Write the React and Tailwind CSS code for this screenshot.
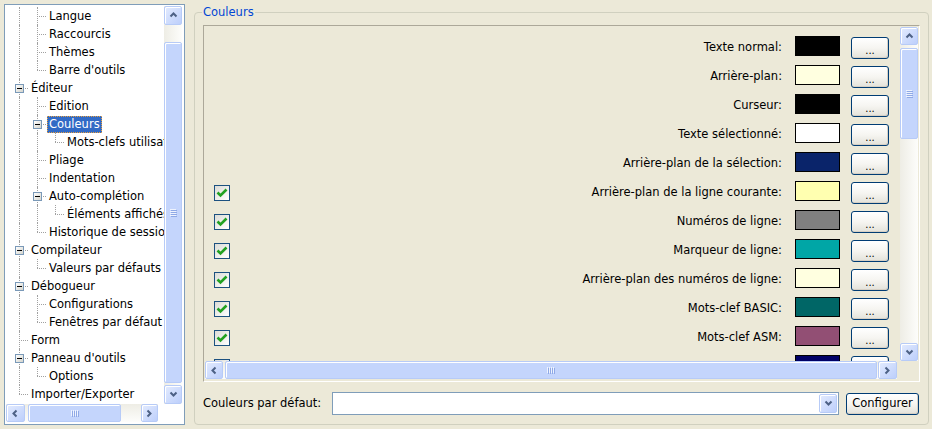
import React from 'react';

const treeRows = [
  { label: 'Langue', guides: ['I', 'T'] },
  { label: 'Raccourcis', guides: ['I', 'T'] },
  { label: 'Thèmes', guides: ['I', 'T'] },
  { label: "Barre d'outils", guides: ['I', 'L'] },
  { label: 'Éditeur', guides: ['T'], box: true },
  { label: 'Edition', guides: ['I', 'T'] },
  { label: 'Couleurs', guides: ['I', 'T'], box: true, selected: true },
  { label: 'Mots-clefs utilisateur', guides: ['I', 'I', 'L'] },
  { label: 'Pliage', guides: ['I', 'T'] },
  { label: 'Indentation', guides: ['I', 'T'] },
  { label: 'Auto-complétion', guides: ['I', 'T'], box: true },
  { label: 'Éléments affichés', guides: ['I', 'I', 'L'] },
  { label: 'Historique de session', guides: ['I', 'L'] },
  { label: 'Compilateur', guides: ['T'], box: true },
  { label: 'Valeurs par défauts', guides: ['I', 'L'] },
  { label: 'Débogueur', guides: ['T'], box: true },
  { label: 'Configurations', guides: ['I', 'T'] },
  { label: 'Fenêtres par défaut', guides: ['I', 'L'] },
  { label: 'Form', guides: ['T'] },
  { label: "Panneau d'outils", guides: ['T'], box: true },
  { label: 'Options', guides: ['I', 'L'] },
  { label: 'Importer/Exporter', guides: ['L'] },
];

// the last row is mostly hidden behind the horizontal scrollbar
const colorRows = [
  { label: 'Texte normal:', color: '#000000' },
  { label: 'Arrière-plan:', color: '#ffffe0' },
  { label: 'Curseur:', color: '#000000' },
  { label: 'Texte sélectionné:', color: '#ffffff' },
  { label: 'Arrière-plan de la sélection:', color: '#0a246a' },
  { label: 'Arrière-plan de la ligne courante:', color: '#ffffb0', check: true },
  { label: 'Numéros de ligne:', color: '#808080', check: true },
  { label: 'Marqueur de ligne:', color: '#00a6a6', check: true },
  { label: 'Arrière-plan des numéros de ligne:', color: '#ffffe0', check: true },
  { label: 'Mots-clef BASIC:', color: '#006666', check: true },
  { label: 'Mots-clef ASM:', color: '#924f74', check: true },
  { label: '', color: '#000066', check: true },
];

function Chevron({ dir }) {
  const paths = {
    up: 'M1.5 5.5 L4.5 2.5 L7.5 5.5',
    down: 'M1.5 2.5 L4.5 5.5 L7.5 2.5',
    left: 'M5.5 1.5 L2.5 4.5 L5.5 7.5',
    right: 'M2.5 1.5 L5.5 4.5 L2.5 7.5',
  };
  return (
    <svg width="9" height="9" viewBox="0 0 9 9">
      <path d={paths[dir]} fill="none" stroke="#4d6185" strokeWidth="2" />
    </svg>
  );
}

function ScrollButton({ dir, className = '' }) {
  return (
    <div
      className={`flex items-center justify-center rounded-[2px] border border-[#b7cbf7] bg-linear-to-br from-[#e3ebfe] to-[#bdcffb] shadow-[inset_1px_1px_0_#ffffff] ${className}`}
    >
      <Chevron dir={dir} />
    </div>
  );
}

function Grip({ vertical }) {
  if (vertical) {
    return (
      <svg width="7" height="8" viewBox="0 0 7 8">
        {[0, 2, 4, 6].map((y) => (
          <g key={y}>
            <rect x="0" y={y} width="6" height="1" fill="#eef3fe" />
            <rect x="1" y={y + 1} width="6" height="1" fill="#8fa9e6" />
          </g>
        ))}
      </svg>
    );
  }
  return (
    <svg width="8" height="7" viewBox="0 0 8 7">
      {[0, 2, 4, 6].map((x) => (
        <g key={x}>
          <rect x={x} y="0" width="1" height="6" fill="#eef3fe" />
          <rect x={x + 1} y="1" width="1" height="6" fill="#8fa9e6" />
        </g>
      ))}
    </svg>
  );
}

function Thumb({ vertical, className = '' }) {
  return (
    <div
      className={`flex items-center justify-center rounded-[2px] border border-[#b7cbf7] bg-[#c4d5fc] shadow-[inset_1px_1px_0_#ffffff] ${className}`}
    >
      <Grip vertical={vertical} />
    </div>
  );
}

function Guide({ type, box }) {
  return (
    <div className="relative w-[18px] h-[18px] shrink-0">
      {(type === 'I' || type === 'T') && (
        <span className="absolute left-[9px] top-0 bottom-0 border-l border-dotted border-[#a0a0a0]" />
      )}
      {type === 'L' && (
        <span className="absolute left-[9px] top-0 h-[9px] border-l border-dotted border-[#a0a0a0]" />
      )}
      {(type === 'T' || type === 'L') && (
        <span className="absolute left-[9px] right-0 top-[9px] border-t border-dotted border-[#a0a0a0]" />
      )}
      {box && (
        <span className="absolute left-[5px] top-[5px] w-[9px] h-[9px] border border-[#7a99b8] bg-linear-to-br from-white to-[#d4d4cc] flex items-center justify-center">
          <span className="w-[5px] h-px bg-black" />
        </span>
      )}
    </div>
  );
}

function TreePanel() {
  return (
    <div className="w-[181px] h-[421px] shrink-0 border border-[#7f9db9] bg-white flex flex-col p-px pr-[2px] pb-[2px]">
      <div className="flex flex-1 min-h-0">
        <div className="flex-1 overflow-hidden pl-[4px] pt-px">
          {treeRows.map((r, i) => (
            <div key={i} className="flex h-[18px] items-center whitespace-nowrap">
              {r.guides.map((g, j) => (
                <Guide key={j} type={g} box={r.box && j === r.guides.length - 1} />
              ))}
              <span
                className={`ml-px px-[2px] h-[17px] leading-[17px] ${
                  r.selected ? 'bg-[#316ac5] text-white outline outline-1 outline-dotted outline-[#e8a040] -outline-offset-1' : ''
                }`}
              >
                {r.label}
              </span>
            </div>
          ))}
        </div>
        <div className="w-[18px] flex flex-col bg-linear-to-r from-[#eeede5] to-[#fdfdfb]">
          <ScrollButton dir="up" className="h-[19px] shrink-0" />
          <div className="flex-1 flex flex-col pt-[17px] pb-[2px]">
            <Thumb vertical className="flex-1" />
          </div>
          <ScrollButton dir="down" className="h-[19px] shrink-0" />
        </div>
      </div>
      <div className="flex h-[18px] shrink-0">
        <div className="w-[152px] flex bg-linear-to-b from-[#eeede5] to-[#fdfdfb]">
          <ScrollButton dir="left" className="w-[19px] shrink-0" />
          <div className="flex-1 flex pl-[3px] pr-[20px]">
            <Thumb className="flex-1" />
          </div>
          <ScrollButton dir="right" className="w-[17px] shrink-0" />
        </div>
        <div className="flex-1" />
      </div>
    </div>
  );
}

function CheckBox() {
  return (
    <div className="w-[16px] h-[16px] border border-[#1c5180] bg-linear-to-br from-[#dcdcd6] to-white flex items-center justify-center">
      <svg width="12" height="12" viewBox="0 0 12 12">
        <path d="M1.5 5.5 L4.5 8.5 L10.5 2.5" fill="none" stroke="#21a121" strokeWidth="2.6" />
      </svg>
    </div>
  );
}

function XpButton({ children, className = '' }) {
  return (
    <div
      className={`rounded-[3px] border border-[#003c74] bg-linear-to-b from-white via-[#f6f5f1] to-[#e3e2da] flex items-center justify-center shadow-[inset_-1px_-1px_0_#d6d0c5] ${className}`}
    >
      {children}
    </div>
  );
}

function ColorRow({ row }) {
  return (
    <div className="flex h-[29px] shrink-0 items-start">
      <div className="w-[16px] shrink-0 mt-[9px]">{row.check && <CheckBox />}</div>
      <div className="flex-1 text-right leading-[32px] mr-[13px] whitespace-nowrap">{row.label}</div>
      <div className="w-[45px] h-[20px] mt-[5px] border border-black shrink-0" style={{ backgroundColor: row.color }} />
      <XpButton className="ml-[11px] w-[38px] h-[22px] mt-[6px] shrink-0 text-[10px] leading-none pt-[6px]">...</XpButton>
    </div>
  );
}

function ColorsGroup() {
  return (
    <fieldset className="ml-[9px] mt-px w-[735px] h-[420px] shrink-0 border border-[#d0d0bf] rounded-[4px] pl-[8px] pr-[7px] pt-[6px]">
      <legend className="-ml-px px-px text-[#0046d5] leading-[14px]">Couleurs</legend>
      <div className="w-[717px] h-[357px] border border-[#aca899] border-r-white border-b-white flex flex-col p-px pb-[2px]">
        <div className="flex flex-1 min-h-0">
          <div className="flex-1 overflow-hidden flex flex-col pt-[4px] pl-[9px] pr-[11px]">
            {colorRows.map((r, i) => (
              <ColorRow key={i} row={r} />
            ))}
          </div>
          <div className="w-[18px] flex flex-col bg-linear-to-r from-[#eeede5] to-[#fdfdfb]">
            <ScrollButton dir="up" className="h-[18px] shrink-0" />
            <div className="flex-1 flex flex-col pt-[3px]">
              <Thumb vertical className="h-[91px]" />
            </div>
            <ScrollButton dir="down" className="h-[18px] shrink-0" />
          </div>
        </div>
        <div className="flex h-[18px] shrink-0">
          <div className="flex-1 flex bg-linear-to-b from-[#eeede5] to-[#fdfdfb]">
            <ScrollButton dir="left" className="w-[18px] shrink-0" />
            <div className="flex-1 flex pl-[2px] pr-px">
              <Thumb className="flex-1" />
            </div>
            <ScrollButton dir="right" className="w-[19px] shrink-0" />
          </div>
          <div className="w-[21px]" />
        </div>
      </div>
      <div className="flex items-center mt-[10px] h-[23px]">
        <div className="w-[129px] shrink-0 whitespace-nowrap">Couleurs par défaut:</div>
        <div className="w-[507px] h-[23px] border border-[#7f9db9] bg-white flex justify-end p-px shrink-0">
          <ScrollButton dir="down" className="w-[18px]" />
        </div>
        <XpButton className="ml-[7px] w-[73px] h-[22px] shrink-0">Configurer</XpButton>
      </div>
    </fieldset>
  );
}

export default function App() {
  return (
    <div className="w-[932px] h-[429px] overflow-hidden bg-[#ece9d8] flex items-start pt-[4px] pl-[4px] font-['DejaVu_Sans',sans-serif] text-[11.5px] text-black">
      <TreePanel />
      <ColorsGroup />
    </div>
  );
}
